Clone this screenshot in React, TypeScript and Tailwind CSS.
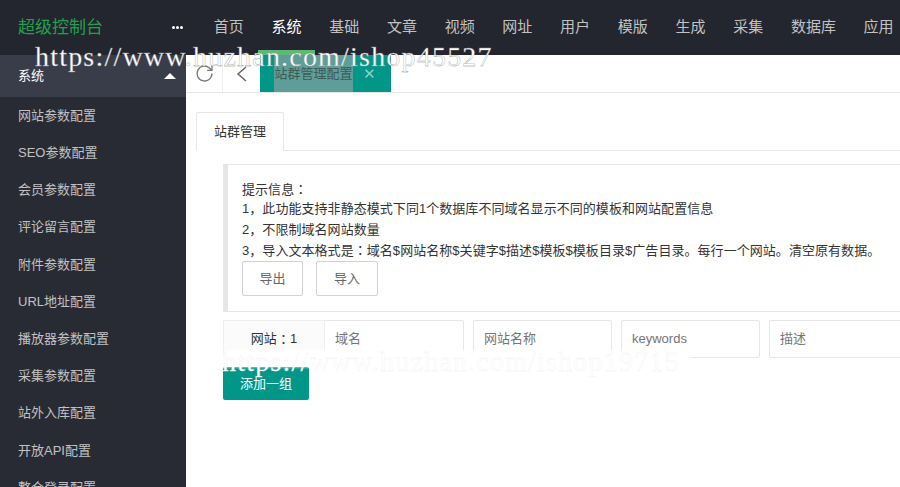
const navItems = ['首页', '系统', '基础', '文章', '视频', '网址', '用户', '模版', '生成', '采集', '数据库', '应用']

const sideItems = [
  '网站参数配置',
  'SEO参数配置',
  '会员参数配置',
  '评论留言配置',
  '附件参数配置',
  'URL地址配置',
  '播放器参数配置',
  '采集参数配置',
  '站外入库配置',
  '开放API配置',
  '整合登录配置',
]

const placeholders = ['域名', '网站名称', 'keywords']

// the reference centres its full-width colon, the TC face does that too
const Colon = () => <span className="font-['Noto_Sans_CJK_TC',sans-serif]">：</span>

export default function App() {
  return (
    <div className="relative flex h-[487px] w-[900px] flex-col overflow-hidden bg-white font-['Liberation_Sans','Noto_Sans_CJK_SC',sans-serif]">
      <header className="flex h-[55px] shrink-0 items-center bg-[#23262e]">
        <div className="w-[160px] shrink-0 pl-[18px] text-[17px] text-[#22a04f]">超级控制台</div>
        <div className="flex w-[40px] shrink-0 justify-center gap-[1px] pr-[6px]">
          <span className="h-[3px] w-[3px] rounded-full bg-white" />
          <span className="h-[3px] w-[3px] rounded-full bg-white" />
          <span className="h-[3px] w-[3px] rounded-full bg-white" />
        </div>
        <nav className="flex shrink-0 whitespace-nowrap text-[15px] text-[#c2c2c2]">
          {navItems.map(item => (
            <span key={item} className={`px-[13.85px] ${item === '系统' ? 'text-white' : ''}`}>{item}</span>
          ))}
        </nav>
      </header>

      <div className="flex min-h-0 flex-1">
        <aside className="w-[186px] shrink-0 bg-[#282b33] text-[13px] text-[#c2c2c2]">
          <div className="flex h-[42px] items-center justify-between bg-[#393d49] pl-[18px] pr-[8px] text-white">
            <span>系统</span>
            <span className="mr-[2px] h-0 w-0 border-x-[6px] border-b-[6px] border-x-transparent border-b-white" />
          </div>
          {sideItems.map(item => (
            <div key={item} className="flex h-[37.2px] items-center whitespace-nowrap pl-[18px]">{item}</div>
          ))}
        </aside>

        <main className="min-w-0 flex-1">
          <div className="flex h-[38px] border-b border-[#e6e6e6]">
            <div className="flex w-[37px] items-center justify-center border-r border-[#eeeeee]">
              <svg width="21" height="21" viewBox="0 0 24 24" fill="none" stroke="#777" strokeWidth="1.5">
                <path d="M20.5 12a8.5 8.5 0 1 1-2.6-6.1L20.5 8.5" />
                <path d="M20.5 3v5.5H15" />
              </svg>
            </div>
            <div className="flex w-[37px] items-center justify-center">
              <svg width="16" height="18" viewBox="0 0 16 18" fill="none" stroke="#666" strokeWidth="1.5">
                <path d="M12 2 4 9l8 7" />
              </svg>
            </div>
            <div className="flex w-[131px] items-center bg-[#009688] pl-[14px] text-[13px]">
              <span className="flex h-full w-[79px] items-center justify-center whitespace-nowrap bg-[#5f9e98] text-[#3d5a57]">站群管理配置</span>
              <span className="ml-[10px] text-[15px] leading-none text-[#8fd0ca]">✕</span>
            </div>
          </div>

          <div className="pl-[10px] pt-[19px]">
            <div className="flex h-[39px] border-b border-[#e6e6e6]">
              <div className="flex h-[39px] w-[88px] items-center justify-center rounded-t-[2px] border border-b-white border-[#e6e6e6] bg-white text-[13px] text-[#333333]">站群管理</div>
            </div>

            <div className="ml-[27px] mt-[13px] h-[148px] w-[700px] border-y border-l-[5px] border-[#e6e6e6] pl-[14px] pt-[14px] text-[13px] tracking-[0.05px] text-[#333333]">
              <div className="h-[20.3px] leading-[20.3px]">提示信息<Colon /></div>
              <div className="h-[20.3px] whitespace-nowrap leading-[20.3px]">1，此功能支持非静态模式下同1个数据库不同域名显示不同的模板和网站配置信息</div>
              <div className="h-[20.3px] whitespace-nowrap leading-[20.3px]">2，不限制域名网站数量</div>
              <div className="h-[20.3px] whitespace-nowrap leading-[20.3px]">3，导入文本格式是<Colon />域名$网站名称$关键字$描述$模板$模板目录$广告目录。每行一个网站。清空原有数据。</div>
              <div className="mt-[1px] flex gap-[13px] text-[#666666]">
                <button className="h-[35px] w-[61px] rounded-[2px] border border-[#d2d2d2] bg-white">导出</button>
                <button className="h-[35px] w-[62px] rounded-[2px] border border-[#d2d2d2] bg-white">导入</button>
              </div>
            </div>

            <div className="ml-[27px] mt-[8px] flex h-[38px] w-[720px] text-[13px]">
              <div className="flex w-[102px] shrink-0 items-center justify-center border border-[#eeeeee] bg-[#fbfbfb] text-[#333333]">网站<Colon />1</div>
              <div className="flex w-[139px] shrink-0 items-center rounded-r-[2px] border border-l-0 border-[#e6e6e6] pl-[10px] text-[#757575]">{placeholders[0]}</div>
              <div className="ml-[9px] flex w-[139px] shrink-0 items-center rounded-[2px] border border-[#e6e6e6] pl-[10px] text-[#757575]">{placeholders[1]}</div>
              <div className="ml-[9px] flex w-[139px] shrink-0 items-center rounded-[2px] border border-[#e6e6e6] pl-[10px] text-[#757575]">{placeholders[2]}</div>
              <div className="ml-[9px] flex w-[139px] shrink-0 items-center rounded-[2px] border border-[#e6e6e6] pl-[10px] text-[#757575]">描述</div>
            </div>

            <button className="ml-[27px] mt-[9px] h-[33px] w-[86px] rounded-[2px] bg-[#009688] text-[13px] text-white">添加一组</button>
          </div>
        </main>
      </div>

      {/* nav highlight bar and the two watermarks sit over everything */}
      <div className="absolute left-[258px] top-[50px] h-[5px] w-[57px] bg-[#5fb878]" />
      <div className="absolute left-[35px] top-[41px] whitespace-nowrap font-['Liberation_Serif',serif] text-[28px] leading-[32px] tracking-[1.2px] text-white [-webkit-text-stroke:0.3px_#8a8a8a]">
        https://www.huzhan.com/ishop45527
      </div>
      <div className="absolute left-[223px] top-[350px] h-[17px] w-[467px] bg-white/95 blur-[1.5px]" />
      <div className="absolute left-[222px] top-[346px] whitespace-nowrap font-['Liberation_Serif',serif] text-[28px] leading-[32px] tracking-[1.2px] text-white [-webkit-text-stroke:0.3px_#efefef]">
        https://www.huzhan.com/ishop19715
      </div>
    </div>
  )
}
